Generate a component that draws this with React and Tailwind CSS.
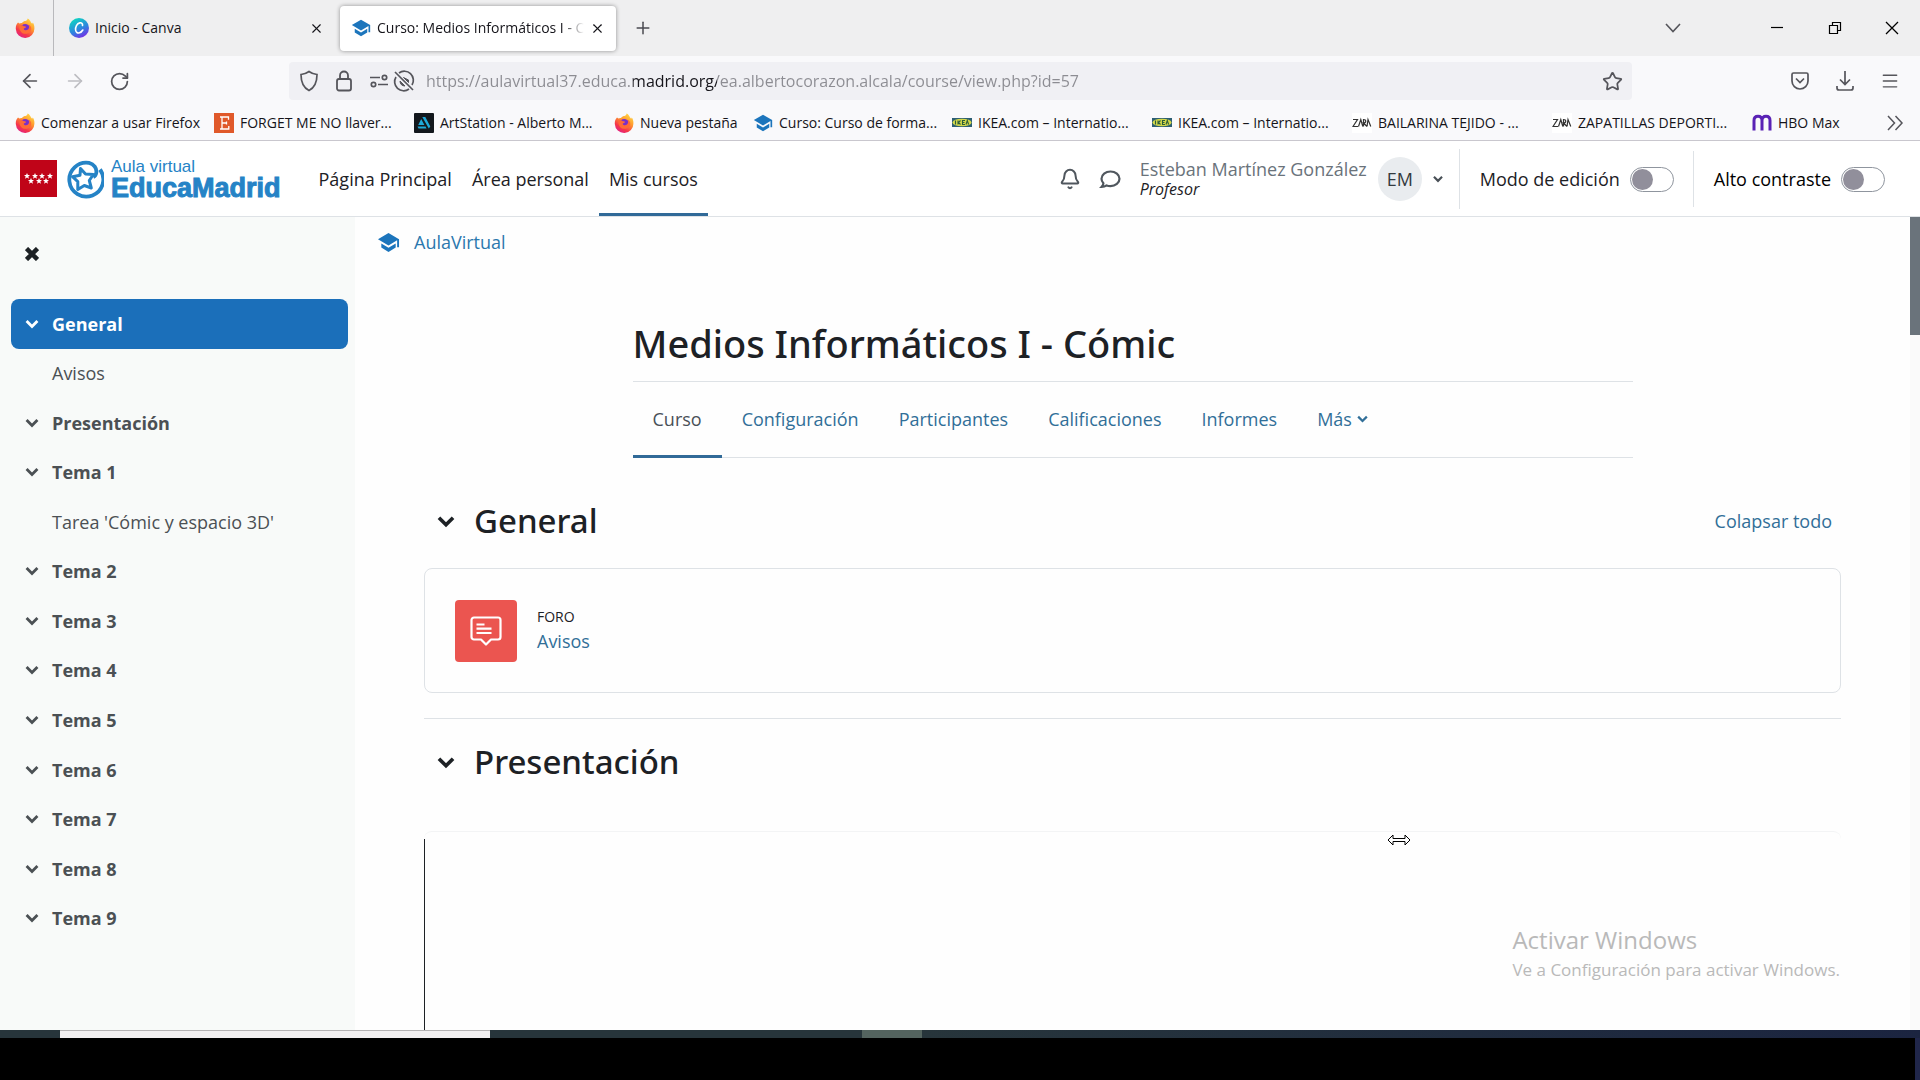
import { ArrowLeft, ArrowRight, Bell, Menu, Plus, RotateCw, Star, X } from "lucide-react";

const sections = [
  { name: "General", active: true },
  { name: "Avisos", child: true },
  { name: "Presentación" },
  { name: "Tema 1" },
  { name: "Tarea 'Cómic y espacio 3D'", child: true },
  { name: "Tema 2" },
  { name: "Tema 3" },
  { name: "Tema 4" },
  { name: "Tema 5" },
  { name: "Tema 6" },
  { name: "Tema 7" },
  { name: "Tema 8" },
  { name: "Tema 9" },
];

const courseTabs = ["Configuración", "Participantes", "Calificaciones", "Informes"];

const bookmarks = [
  { icon: FirefoxIcon, label: "Comenzar a usar Firefox", width: "w-[199px]" },
  { icon: EtsyIcon, label: "FORGET ME NO llaver...", width: "w-[200px]" },
  { icon: ArtStationIcon, label: "ArtStation - Alberto M...", width: "w-[200px]" },
  { icon: FirefoxIcon, label: "Nueva pestaña", width: "w-[139px]" },
  { icon: CapIcon, label: "Curso: Curso de forma...", width: "w-[199px]" },
  { icon: IkeaIcon, label: "IKEA.com – Internatio...", width: "w-[200px]" },
  { icon: IkeaIcon, label: "IKEA.com – Internatio...", width: "w-[200px]" },
  { icon: ZaraIcon, label: "BAILARINA TEJIDO - ...", width: "w-[200px]" },
  { icon: ZaraIcon, label: "ZAPATILLAS DEPORTI...", width: "w-[200px]" },
  { icon: HboIcon, label: "HBO Max", width: "w-[100px]" },
];

function FirefoxIcon() {
  return (
    <svg viewBox="0 0 20 20" className="size-5 shrink-0">
      <defs>
        <linearGradient id="ff-fire" x1="0.85" y1="0" x2="0.25" y2="1">
          <stop offset="0" stopColor="#ffe14a" />
          <stop offset="0.4" stopColor="#ff9a2e" />
          <stop offset="0.75" stopColor="#f5364a" />
          <stop offset="1" stopColor="#e0208a" />
        </linearGradient>
      </defs>
      <path
        d="M3 4.500c.6.2 1 .6 1.300 1 .8-.5 1.700-.7 2.700-.6C8 3.500 9.500 3 10.500 3 12 2.500 12.500 1.500 12.600.5c2 1 3 2.700 3.400 4 .5.300.8.800 1 1.300.5-.300.7-.800.700-1.300 1.300 1.500 1.800 3.600 1.700 5.800A9.300 9.300 0 0 1 .800 11C.600 8.400 1.400 6.200 3 4.500z"
        fill="url(#ff-fire)"
      />
      <circle cx="10.200" cy="10.500" r="4.600" fill="#7a2fc9" />
      <path d="M4.500 7.500c2-.8 3.500-.2 4.500.8 1 0 2 .3 2.300.8-.6 1-2 .9-2.600 1.800.5 1.300 2.600 1.700 4.300.6 1.500-1.500 1.500-3.500.5-5 3 1.500 3.500 5 1.700 7.300-2.700 3-8 2.700-9.800-.8-.9-1.800-1.200-3.700-.9-5.500z" fill="#ff6a36" />
    </svg>
  );
}

function CanvaIcon() {
  return (
    <svg viewBox="0 0 20 20" className="size-5 shrink-0">
      <defs>
        <linearGradient id="canva" x1="0.200" y1="0" x2="0.700" y2="1">
          <stop offset="0.100" stopColor="#10cfc4" />
          <stop offset="0.600" stopColor="#2f80e0" />
          <stop offset="1" stopColor="#7a2be6" />
        </linearGradient>
      </defs>
      <circle cx="10" cy="10" r="10" fill="url(#canva)" />
      <path
        d="M13.500 7.500c.4-2-1-3-2.700-2.600C7.800 5.600 6.300 9 6.600 12c.3 2.500 2 3.300 3.800 2.800 1.500-.4 2.600-1.400 3.400-2.800"
        fill="none"
        stroke="#fff"
        strokeWidth="1.600"
        strokeLinecap="round"
      />
    </svg>
  );
}

function CapIcon({ className = "size-5" }) {
  return (
    <svg viewBox="0 0 24 24" className={`${className} shrink-0 fill-[#1c75bc]`}>
      <path d="M12 2 1 8.500l11 6.500 9-5.300V17h2V8.500z" />
      <path d="M4.500 13v4.300L12 22l7.500-4.700V13L12 17.500z" />
    </svg>
  );
}

function EtsyIcon() {
  return (
    <svg viewBox="0 0 20 20" className="size-5 shrink-0">
      <path d="M0 0h20v20H0z" fill="#e0592a" />
      <path d="M6 4h8.500v2.800M6 16h8.800V13M8 4v12M8 10h4.500M12.500 8.500v3" fill="none" stroke="#fff" strokeWidth="1.300" />
    </svg>
  );
}

function ArtStationIcon() {
  return (
    <svg viewBox="0 0 20 20" className="size-5 shrink-0">
      <rect width="20" height="20" rx="1" fill="#13181d" />
      <path d="M8.300 4h3l5 9.500-1.500 2zM7.200 6l3.200 6H4.200zM3.500 13.500h8l1.100 2H4.500z" fill="#1fa9d8" />
    </svg>
  );
}

function IkeaIcon() {
  return (
    <svg viewBox="0 0 20 20" className="size-5 shrink-0">
      <path d="M0 5h20v9H0z" fill="#2d5f73" />
      <ellipse cx="10" cy="9.500" rx="9.500" ry="3.800" fill="#d3d84a" />
      <path d="M3.500 7.500v4M6 7.500v4M8.500 7.500 6.500 9.500l2 2M13 7.500h-2.500v4H13M10.500 9.500h2M14 11.500l1.300-4 1.300 4" fill="none" stroke="#2d5f3a" strokeWidth="1.100" />
    </svg>
  );
}

function ZaraIcon() {
  return (
    <svg viewBox="0 0 20 20" className="size-5 shrink-0 bg-white">
      <path d="M1 6.500h4.500L1 13.500h5M6.500 13.500l2.300-7 2 7M11.500 13.500v-7c3 0 3 3.500 0 3.500l3.500 3.500M15 13.500l1-7 2.800 7" fill="none" stroke="#333" strokeWidth="1.200" />
    </svg>
  );
}

function HboIcon() {
  return (
    <svg viewBox="0 0 20 20" className="size-5 shrink-0">
      <path d="M2 17.500V7.500C2 4.500 3.500 3.200 6 3.200s4 1.300 4 4.300v10M10 7.500c0-3 1.500-4.300 4-4.300s4 1.300 4 4.300v10" fill="none" stroke="#5a22b5" strokeWidth="3" />
    </svg>
  );
}

function Chevron({ className }) {
  return (
    <svg viewBox="0 0 16 12" className={`${className} shrink-0`} fill="none" stroke="currentColor" strokeWidth="3.400">
      <path d="M1.500 2.500 8 9l6.500-6.500" />
    </svg>
  );
}

function TabStrip() {
  return (
    <div className="flex h-14 items-center bg-[#efeff0]">
      <div className="flex h-full w-[54px] items-center justify-center border-r border-[#b9b9bc] pr-1">
        <FirefoxIcon />
      </div>
      <div className="flex w-[286px] items-center gap-[6px] pr-4 pl-[15px]">
        <CanvaIcon />
        <span className="flex-1">Inicio - Canva</span>
        <button aria-label="Cerrar Inicio - Canva">
          <X className="size-[15px]" strokeWidth={1.8} />
        </button>
      </div>
      <div className="flex h-[45px] w-[276px] items-center gap-[6px] rounded-sm bg-white pr-3 pl-[11px] shadow-[0_0_4px_rgba(0,0,0,0.4)]">
        <CapIcon />
        <span className="flex-1 whitespace-nowrap [mask-image:linear-gradient(90deg,#000_90%,transparent)]">
          Curso: Medios Informáticos I - C
        </span>
        <button aria-label="Cerrar Curso">
          <X className="size-[15px]" strokeWidth={1.8} />
        </button>
      </div>
      <button aria-label="Nueva pestaña" className="ml-[17px]">
        <Plus className="size-5 text-[#4a4a50]" strokeWidth={1.8} />
      </button>
      <div className="ml-auto flex items-center pr-5">
        <button aria-label="Listar pestañas" className="mr-[88px]">
          <svg viewBox="0 0 18 12" className="h-3 w-[18px]" fill="none" stroke="#55555b" strokeWidth="1.600">
            <path d="m2 2 7 7.500L16 2" />
          </svg>
        </button>
        <button aria-label="Minimizar" className="mr-11">
          <svg viewBox="0 0 14 14" className="size-[14px]" fill="none" stroke="#000" strokeWidth="1.200">
            <path d="M1 6.500h12" />
          </svg>
        </button>
        <button aria-label="Restaurar" className="mr-[42px]">
          <svg viewBox="0 0 14 14" className="size-[14px]" fill="none" stroke="#000" strokeWidth="1.200">
            <path d="M1.500 4.500h8V12.500h-8zM4.500 4.500V1.500h8v8H9.500" />
          </svg>
        </button>
        <button aria-label="Cerrar">
          <svg viewBox="0 0 16 16" className="size-4" fill="none" stroke="#000" strokeWidth="1.300">
            <path d="m2 2 12 12M14 2 2 14" />
          </svg>
        </button>
      </div>
    </div>
  );
}

function Toolbar() {
  return (
    <div className="flex h-[50px] items-center pr-5 pl-[19px] text-[#55555b]">
      <button aria-label="Atrás">
        <ArrowLeft className="size-[22px]" strokeWidth={1.8} />
      </button>
      <button aria-label="Adelante" className="ml-[23px]" disabled>
        <ArrowRight className="size-[22px] text-[#bdbdc2]" strokeWidth={1.8} />
      </button>
      <button aria-label="Recargar" className="ml-[23px]">
        <RotateCw className="size-[21px]" strokeWidth={2} />
      </button>
      <div className="mr-[158px] ml-[159px] flex h-[38px] flex-1 items-center rounded bg-[#f0f0f4] pr-[9px] pl-[10px]">
        <svg viewBox="0 0 20 22" className="h-[22px] w-5" fill="none" stroke="currentColor" strokeWidth="1.700">
          <path d="M10 1.500c2.500 1.800 5 2.700 8 3 0 7-2 13-8 16-6-3-8-9-8-16 3-.3 5.500-1.200 8-3z" />
        </svg>
        <svg viewBox="0 0 18 22" className="ml-4 h-[22px] w-[18px]" fill="none" stroke="currentColor" strokeWidth="1.800">
          <rect x="2" y="9" width="14" height="11.500" rx="2" />
          <path d="M5 9V5.500a4 4 0 0 1 8 0V9" />
        </svg>
        <svg viewBox="0 0 20 16" className="ml-4 h-4 w-5" fill="none" stroke="currentColor" strokeWidth="1.700">
          <path d="M1 4.500h10M9 11.500h10" />
          <circle cx="15.500" cy="4.500" r="2.200" />
          <circle cx="4.500" cy="11.500" r="2.200" />
        </svg>
        <svg viewBox="0 0 22 22" className="ml-1 size-[22px]" fill="none" stroke="currentColor" strokeWidth="1.700">
          <path d="M6 3a9 9 0 0 1 13 12M16 19a9 9 0 0 1-13-12M2 2l18 18" />
          <path d="M7 11l5 5c-3 0-5-2-5-5zM10.500 7.500l5 5v-2.500z" fill="currentColor" strokeWidth="1" />
        </svg>
        <input
          aria-label="Dirección"
          className="ml-[11px] flex-1 bg-[linear-gradient(90deg,#8c8c92_207px,#15141a_207px,#15141a_291px,#8c8c92_291px)] bg-clip-text text-base text-transparent outline-none"
          defaultValue="https://aulavirtual37.educa.madrid.org/ea.albertocorazon.alcala/course/view.php?id=57"
        />
        <button aria-label="Añadir a marcadores">
          <Star className="size-[21px]" strokeWidth={2} />
        </button>
      </div>
      <div className="flex items-center gap-[25px]">
        <button aria-label="Pocket">
          <svg viewBox="0 0 20 20" className="size-5" fill="none" stroke="currentColor" strokeWidth="1.700">
            <path d="M3.500 2h13A1.500 1.500 0 0 1 18 3.500V10a8 8 0 0 1-16 0V3.500A1.500 1.500 0 0 1 3.500 2z" />
            <path d="m6 7.500 4 4 4-4" />
          </svg>
        </button>
        <button aria-label="Descargas">
          <svg viewBox="0 0 20 20" className="size-5" fill="none" stroke="currentColor" strokeWidth="1.700">
            <path d="M10 0v13M5 8.500l5 5 5-5M2 15v2a2 2 0 0 0 2 2h12a2 2 0 0 0 2-2v-2" />
          </svg>
        </button>
        <button aria-label="Menú">
          <Menu className="size-5" strokeWidth={1.7} />
        </button>
      </div>
    </div>
  );
}

function Bookmarks() {
  return (
    <div className="flex h-[34px] items-center pl-[15px]">
      {bookmarks.map(({ icon: Icon, label, width }, i) => (
        <a key={i} href="#" className={`flex shrink-0 items-center gap-[6px] whitespace-nowrap ${width}`}>
          <Icon />
          {label}
        </a>
      ))}
      <button aria-label="Más marcadores" className="mr-4 ml-auto">
        <svg viewBox="0 0 18 18" className="size-[18px]" fill="none" stroke="#55555b" strokeWidth="1.500">
          <path d="m2 2 6.500 7L2 16M9.500 2l6.500 7-6.500 7" />
        </svg>
      </button>
    </div>
  );
}

function Logo() {
  return (
    <a href="#" className="flex items-center">
      <svg viewBox="0 0 37 37" className="size-[37px]">
        <path d="M0 0h37v37H0z" fill="#c00418" />
        {[7, 15, 22, 30, 11, 19, 26].map((x, i) => (
          <path
            key={x}
            transform={`translate(${x} ${i < 4 ? 16 : 21})`}
            d="M0-3 .9-.9 3-.9 1.300.5 2 2.700 0 1.400-2 2.700-1.300.5-3-.9-.9-.9z"
            fill="#fff"
          />
        ))}
      </svg>
      <svg viewBox="0 0 40 40" className="ml-[7px] size-10" fill="none" stroke="#2583c6">
        <path d="M36 10.500A17 17 0 1 1 25 3.800c5 1.200 8 5.500 7.300 10-.3 2-1.300 3.400-3 4.200" strokeWidth="3.800" />
        <path d="m16.500 9.500 5 5.500 7.800.5-4 6 2 7.500-7-2.500-6.500 4v-7.800l-5.300-5 7.500-1.500z" strokeWidth="3" strokeLinejoin="round" />
      </svg>
      <div className="ml-[7px] font-['Liberation_Sans',sans-serif] text-[#2583c6]">
        <p className="text-[17px] leading-[18px]">Aula virtual</p>
        <p className="text-[27px] leading-6 font-bold [-webkit-text-stroke:1px_#2583c6]">EducaMadrid</p>
      </div>
    </a>
  );
}

function Toggle({ id, label }) {
  return (
    <div className="flex items-center gap-[10px]">
      <label htmlFor={id}>{label}</label>
      <input
        id={id}
        type="checkbox"
        className="h-[25px] w-11 appearance-none rounded-full border border-[#8f959e] bg-white p-px before:block before:size-[21px] before:rounded-full before:bg-[#918f9b]"
      />
    </div>
  );
}

function PageHeader() {
  return (
    <header className="flex h-[76px] shrink-0 items-stretch border-b border-[#dee2e6] bg-white pr-[35px] pl-5 text-lg text-[#1d2125]">
      <Logo />
      <nav className="ml-7 flex">
        <a href="#" className="flex items-center border-b-3 border-transparent px-[10px] pt-1">Página Principal</a>
        <a href="#" className="flex items-center border-b-3 border-transparent px-[10px] pt-1">Área personal</a>
        <a href="#" className="flex items-center border-b-3 border-[#316a98] px-[10px] pt-1">Mis cursos</a>
      </nav>
      <div className="ml-auto flex items-center pt-px">
        <button aria-label="Notificaciones">
          <Bell className="size-[22px] text-[#50575e]" strokeWidth={2.2} />
        </button>
        <button aria-label="Mensajes" className="ml-[18px]">
          <svg viewBox="0 0 22 22" className="size-[22px]" fill="none" stroke="#50575e" strokeWidth="2.200">
            <path d="M11.500 3.500c5 0 9 3.300 9 7.300s-4 7.300-9 7.300c-1.500 0-2.700-.2-3.900-.7-1.300 1-3 1.600-5.100 1.600 1.200-1.200 1.800-2.400 1.900-3.700-1.200-1.300-1.900-2.800-1.900-4.500 0-4 4-7.300 9-7.300z" />
          </svg>
        </button>
        <div className="ml-[19px]">
          <p className="leading-5 text-[#6a737b]">Esteban Martínez González</p>
          <p className="text-base leading-5 italic">Profesor</p>
        </div>
        <button className="ml-[11px] flex items-center gap-[11px]">
          <span className="flex size-11 items-center justify-center rounded-full bg-[#e9ecef] text-[#343a40]">EM</span>
          <Chevron className="h-2 w-[10px] text-[#495057]" />
        </button>
        <div className="ml-4 flex h-[60px] items-center border-l border-[#dee2e6] pl-5">
          <Toggle id="edicion" label="Modo de edición" />
        </div>
        <div className="ml-[19px] flex h-[56px] items-center border-l border-[#dee2e6] pl-5 text-black">
          <Toggle id="contraste" label="Alto contraste" />
        </div>
      </div>
    </header>
  );
}

function Sidebar() {
  return (
    <aside className="w-[355px] shrink-0 bg-[#f8faf9] pt-[30px] pr-[7px] pl-[11px] text-lg text-[#4b5054]">
      <button aria-label="Cerrar índice" className="ml-[14px] block text-[#1d2125]">
        <svg viewBox="0 0 14 14" className="size-[14px]" stroke="currentColor" strokeWidth="4.500">
          <path d="m1.500 1.500 11 11M12.500 1.500l-11 11" />
        </svg>
      </button>
      <ul className="mt-[38px] flex h-[644px] flex-col">
        {sections.map((s) => (
          <li
            key={s.name}
            className={`flex flex-1 items-center ${s.active ? "rounded-lg bg-[#1b6fba] text-white" : ""}`}
          >
            {!s.child && (
              <button aria-label={`Contraer ${s.name}`} className="ml-[14px]">
                <Chevron className="h-[10px] w-[14px]" />
              </button>
            )}
            <a href="#" className={s.child ? "ml-[41px]" : "ml-[13px] font-bold"}>
              {s.name}
            </a>
          </li>
        ))}
      </ul>
    </aside>
  );
}

function SectionTitle({ children }) {
  return (
    <div className="flex items-center pl-[13px] text-[#1d2125]">
      <Chevron className="h-[13px] w-[18px]" />
      <h2 className="ml-[19px] font-['Noto_Sans',sans-serif] text-[33px] leading-10 font-medium">{children}</h2>
    </div>
  );
}

function Course() {
  return (
    <main className="relative min-w-0 flex-1 overflow-hidden bg-[#fefefe] text-lg text-[#316f98]">
      <a href="#" className="flex items-center gap-[14px] pt-[13px] pl-[22px] leading-6 text-[#2b78ae]">
        <CapIcon className="size-[23px]" />
        AulaVirtual
      </a>

      <div className="mx-auto mt-[65px] max-w-[1000px]">
        <h1 className="font-['Noto_Sans',sans-serif] text-[38px] leading-12 font-medium text-[#1d2125]">
          Medios Informáticos I - Cómic
        </h1>
        <nav className="mt-[14px] flex h-[77px] border-y border-[#dee2e6]">
          <a href="#" className="-mb-px flex items-center border-b-3 border-[#316a98] px-5 text-[#495057]">
            Curso
          </a>
          {courseTabs.map((tab) => (
            <a key={tab} href="#" className="-mb-px flex items-center border-b-3 border-transparent px-5">
              {tab}
            </a>
          ))}
          <button className="-mb-px flex items-center gap-[5px] border-b-3 border-transparent px-5">
            Más
            <Chevron className="h-2 w-[11px]" />
          </button>
        </nav>
      </div>

      <div className="mt-[43px] px-[69px]">
        <div className="flex items-center justify-between pr-[9px]">
          <SectionTitle>General</SectionTitle>
          <a href="#">Colapsar todo</a>
        </div>
        <div className="mt-[27px] flex h-[125px] items-center gap-5 rounded-lg border border-[#dee2e6] px-[30px]">
          <div className="flex size-[62px] items-center justify-center rounded bg-[#eb5550]">
            <svg viewBox="0 0 32 32" className="size-8" fill="none" stroke="#fff" strokeWidth="2.200" strokeLinejoin="round">
              <path d="M4 2.500h24a2.500 2.500 0 0 1 2.500 2.500v17a2.500 2.500 0 0 1-2.500 2.500h-7l-5 5-5-5H4A2.500 2.500 0 0 1 1.500 22V5A2.500 2.500 0 0 1 4 2.500z" />
              <path d="M6.500 9.500h8M6.500 13.700h15M6.500 18h15" />
            </svg>
          </div>
          <div className="pb-1">
            <p className="text-sm leading-6 text-[#1d2125]">FORO</p>
            <a href="#" className="block leading-6">Avisos</a>
          </div>
        </div>
        <hr className="mt-[25px] mb-[23px] border-[#dee2e6]" />
        <SectionTitle>Presentación</SectionTitle>
        <div className="mt-[49px] h-2 rounded-t-lg border-t border-[#f3f4f5]" />
        <div className="h-[200px] border-l border-[#1d2125]" />
      </div>

      {/* resize pointer */}
      <svg viewBox="0 0 24 12" className="absolute top-[617px] right-[499px] h-3 w-6" fill="#fff" stroke="#000">
        <path d="M1 6l5-5v3.500h12V1l5 5-5 5V7.500H6V11z" />
      </svg>

      <div className="absolute right-[70px] bottom-[46px] text-[#b9b9b9]">
        <p className="text-2xl leading-8">Activar Windows</p>
        <p className="text-[17px] leading-7">Ve a Configuración para activar Windows.</p>
      </div>
    </main>
  );
}

export default function App() {
  return (
    <div className="flex h-screen flex-col overflow-hidden bg-black font-['Open_Sans',sans-serif]">
      <div className="shrink-0 border-b border-[#c9c7ce] bg-[#f9f9fb] text-sm text-[#15141a]">
        <TabStrip />
        <Toolbar />
        <Bookmarks />
      </div>
      <PageHeader />
      <div className="flex min-h-0 flex-1">
        <Sidebar />
        <Course />
        <div className="w-[10px] shrink-0 bg-[#fafafa]">
          <div className="h-[118px] bg-[#6a737b]" />
        </div>
      </div>
      {/* top edge of the Windows taskbar */}
      <div className="flex h-2 shrink-0">
        <div className="w-15 bg-[#27353b]" />
        <div className="w-[430px] border-t border-[#b5b3b4] bg-[#f3f1f2]" />
        <div className="w-[372px] bg-[#27353b]" />
        <div className="w-[60px] bg-[#54645f]" />
        <div className="flex-1 bg-linear-to-r from-[#27353b] to-[#1b2440]" />
      </div>
      <div className="h-[42px] shrink-0 border-r-[5px] border-[#20264a] bg-black" />
    </div>
  );
}
